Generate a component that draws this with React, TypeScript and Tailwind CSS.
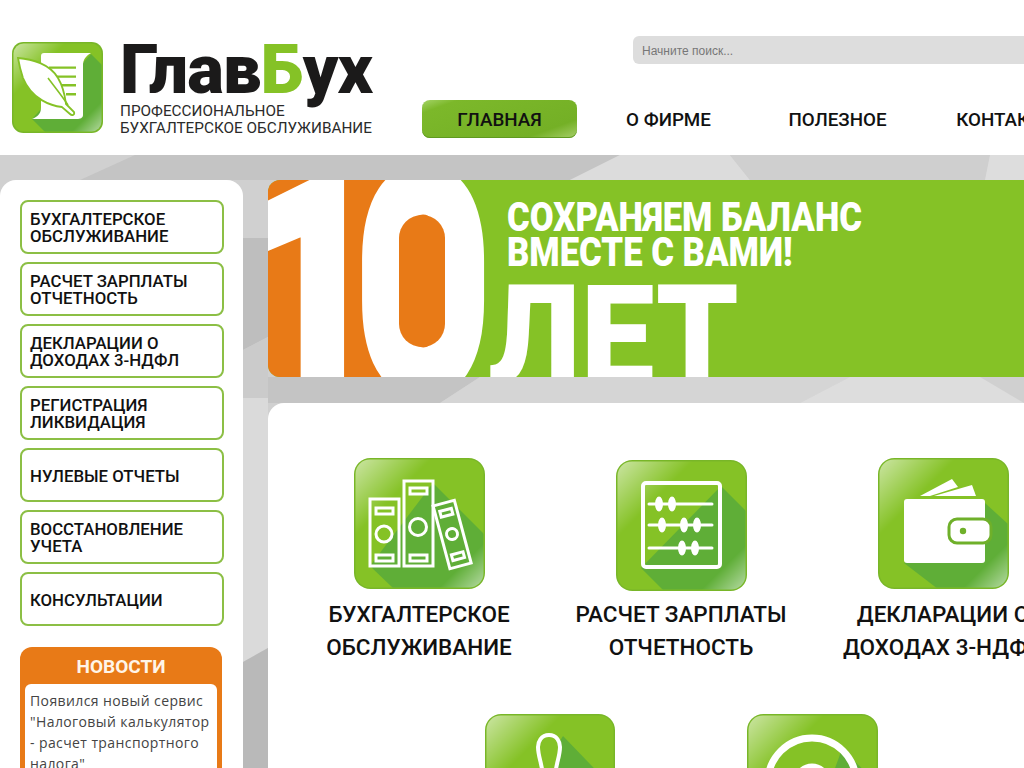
import type { ReactNode } from 'react'

const GREEN = '#85c226'
const SHADOW = '#5fae37'

const sideItems = [
    ['БУХГАЛТЕРСКОЕ', 'ОБСЛУЖИВАНИЕ'],
    ['РАСЧЕТ ЗАРПЛАТЫ', 'ОТЧЕТНОСТЬ'],
    ['ДЕКЛАРАЦИИ О', 'ДОХОДАХ 3-НДФЛ'],
    ['РЕГИСТРАЦИЯ', 'ЛИКВИДАЦИЯ'],
    ['НУЛЕВЫЕ ОТЧЕТЫ'],
    ['ВОССТАНОВЛЕНИЕ', 'УЧЕТА'],
    ['КОНСУЛЬТАЦИИ'],
]

interface TileProps {
    id: string
    size: number
    box: number
    shadow: string
    children: ReactNode
}

const Tile = ({ id, size, box, shadow, children }: TileProps) => {
    return (
        <svg width={size} height={size} viewBox={`0 0 ${box} ${box}`} className="block flex-none">
            <defs>
                <linearGradient id={`${id}-a`} x1="0" y1="0" x2="1" y2="1">
                    <stop offset="0" stopColor="#fff" stopOpacity="0.6" />
                    <stop offset="0.3" stopColor="#fff" stopOpacity="0" />
                </linearGradient>
                <linearGradient id={`${id}-b`} x1="0" y1="0" x2="1" y2="1">
                    <stop offset="0.82" stopColor="#fff" stopOpacity="0" />
                    <stop offset="0.96" stopColor="#fff" stopOpacity="0.45" />
                </linearGradient>
                <clipPath id={`${id}-c`}>
                    <rect x="1.5" y="1.5" width={box - 3} height={box - 3} rx={box * 0.11} />
                </clipPath>
            </defs>
            <rect width={box} height={box} rx={box * 0.125} fill="#78b628" />
            <g clipPath={`url(#${id}-c)`}>
                <rect width={box} height={box} fill={GREEN} />
                <polygon points={shadow} fill={SHADOW} />
                <rect width={box} height={box} fill={`url(#${id}-a)`} />
                <rect width={box} height={box} fill={`url(#${id}-b)`} />
            </g>
            {children}
        </svg>
    )
}

const LogoIcon = () => (
    <Tile id="logo" size={91} box={91} shadow="79,12 91,24 91,91 34,91 20,77">
        <path
            d="M32 11H79C76 13 72 15 71 22V73C71 76 68 77 65 77H20C25 75 29 72 29 66V14C29 12 30 11 32 11Z"
            fill="#fff"
        />
        <g stroke={GREEN} strokeWidth="2.4">
            <path d="M37 25.6H64M42 34.6H64M48 43.3H64M54 52.3H64" />
        </g>
        <path
            d="M6 16C20 17 38 22 46 36C52 46 53 55 54 62L62 70C63 73 60 74 58 72L50 65C40 64 20 58 11 36C9 30 7 22 6 16Z"
            fill="#fff"
            stroke={GREEN}
            strokeWidth="1.8"
        />
        <path d="M36 36C42 44 50 54 56 63" fill="none" stroke={GREEN} strokeWidth="1.6" />
    </Tile>
)

const BooksIcon = () => (
    <Tile id="books" size={131} box={131} shadow="79,25 131,77 131,131 40,131 16,108">
        <g fill="none" stroke="#fff" strokeWidth="3">
            <rect x="16" y="41" width="29" height="67" />
            <rect x="22" y="50" width="17" height="6" />
            <circle cx="30" cy="76" r="8" />
            <rect x="22" y="97" width="17" height="6" />
            <rect x="50" y="23" width="29" height="85" />
            <rect x="56" y="30" width="17" height="6" />
            <circle cx="64" cy="69" r="8.5" />
            <rect x="56" y="97" width="17" height="6" />
            <g transform="rotate(-15 98 76)">
                <rect x="87" y="44" width="22" height="65" />
                <rect x="92" y="51" width="12" height="6" />
                <circle cx="98" cy="76" r="5.5" />
                <rect x="92" y="96" width="12" height="6" />
            </g>
        </g>
    </Tile>
)

const AbacusIcon = () => (
    <Tile id="abacus" size={131} box={131} shadow="105,26 131,52 131,131 48,131 25,108">
        <rect x="27" y="23" width="77" height="84" rx="3" fill="none" stroke="#fff" strokeWidth="4" />
        <path d="M33 44H96M33 65H96M33 88H96" stroke="#fff" strokeWidth="3" strokeLinecap="round" />
        <g fill="#fff">
            <ellipse cx="43" cy="44" rx="4" ry="7.5" />
            <ellipse cx="56" cy="44" rx="4" ry="7.5" />
            <ellipse cx="46" cy="65" rx="4" ry="7.5" />
            <ellipse cx="68" cy="65" rx="4" ry="7.5" />
            <ellipse cx="81" cy="65" rx="4" ry="7.5" />
            <ellipse cx="66" cy="88" rx="4" ry="7.5" />
            <ellipse cx="79" cy="88" rx="4" ry="7.5" />
        </g>
    </Tile>
)

const WalletIcon = () => (
    <Tile id="wallet" size={131} box={131} shadow="107,45 131,67 131,131 60,131 26,105">
        <polygon points="42,38 74,21 80,29 52,38" fill="#fff" />
        <polygon points="56,38 94,27 98,38" fill="#fff" />
        <rect x="26" y="41" width="81" height="64" rx="3" fill="#fff" />
        <rect x="71" y="61" width="42" height="24" rx="8" fill="#fff" stroke="#6fb02a" strokeWidth="3" />
        <circle cx="85" cy="73" r="3.2" fill="#6fb02a" />
    </Tile>
)

const StampIcon = () => (
    <Tile id="stamp" size={130} box={130} shadow="78,22 131,77 131,131 30,131 30,100">
        <path
            d="M64 21C56 21 53 28 53 33C53 42 57 50 58 62H70C71 50 75 42 75 33C75 28 72 21 64 21Z"
            fill={GREEN}
            stroke="#fff"
            strokeWidth="4"
        />
        <rect x="28" y="80" width="72" height="18" rx="3" fill="#fff" />
    </Tile>
)

const TargetIcon = () => (
    <Tile id="target" size={131} box={131} shadow="95,35 131,70 131,131 60,131">
        <circle cx="65" cy="68" r="44" fill="none" stroke="#fff" strokeWidth="7" />
        <circle cx="65" cy="68" r="15" fill="none" stroke="#fff" strokeWidth="7" />
    </Tile>
)

const services = [
    { icon: <BooksIcon />, lines: ['БУХГАЛТЕРСКОЕ', 'ОБСЛУЖИВАНИЕ'], pt: 'pt-0' },
    { icon: <AbacusIcon />, lines: ['РАСЧЕТ ЗАРПЛАТЫ', 'ОТЧЕТНОСТЬ'], pt: 'pt-[2px]' },
    { icon: <WalletIcon />, lines: ['ДЕКЛАРАЦИИ О', 'ДОХОДАХ 3-НДФЛ'], pt: 'pt-0' },
    { icon: <StampIcon />, lines: ['РЕГИСТРАЦИЯ', 'ЛИКВИДАЦИЯ'], pt: 'pt-0' },
    { icon: <TargetIcon />, lines: ['НУЛЕВЫЕ ОТЧЕТЫ'], pt: 'pt-0' },
]

const Background = () => (
    <svg className="absolute inset-0 h-full w-full" viewBox="0 0 1024 613" preserveAspectRatio="none">
        <rect width="1024" height="613" fill="#d0d0d0" />
        <polygon points="135,0 620,0 570,25 80,25" fill="#c4c4c4" />
        <polygon points="620,0 730,0 750,25 570,25" fill="#dcdcdc" />
        <polygon points="730,0 990,0 985,25 750,25" fill="#cfcfcf" />
        <polygon points="990,0 1024,0 1024,25 985,25" fill="#dddddd" />
        <polygon points="243,83 268,83 268,182 243,195" fill="#bebebe" />
        <polygon points="243,195 268,182 268,243 243,243" fill="#cbcbcb" />
        <polygon points="243,243 268,243 268,493 243,507" fill="#dadada" />
        <polygon points="243,507 268,493 268,613 243,613" fill="#b9b9b9" />
        <polygon points="268,222 480,222 440,248 268,248" fill="#c4c4c4" />
        <polygon points="480,222 850,222 800,248 440,248" fill="#d5d5d5" />
        <polygon points="850,222 980,222 1024,248 800,248" fill="#dddddd" />
    </svg>
)

const App = () => {
    return (
        <div className="relative h-[768px] w-[1024px] overflow-hidden bg-white font-['Roboto',sans-serif] text-[#111]">
            <header className="flex h-[155px] items-start pl-3">
                <div className="flex w-[410px] flex-none pt-[42px]">
                    <LogoIcon />
                    <div className="ml-[17px]">
                        <div className="mt-[-8px] h-[66px] text-[69px] leading-[72px] font-black tracking-[-1px] text-[#1b1a1a]">
                            Глав<span className="text-[#85c226]">Б</span>ух
                        </div>
                        <div className="mt-[3px] text-[15.3px] leading-[17px] text-[#2b2b2b]">
                            <div>ПРОФЕССИОНАЛЬНОЕ</div>
                            <div className="whitespace-nowrap">БУХГАЛТЕРСКОЕ ОБСЛУЖИВАНИЕ</div>
                        </div>
                    </div>
                </div>
                <div className="flex-none pt-9">
                    <div className="ml-[211px] flex h-7 w-[500px] items-center rounded-md bg-[#dddddd] pt-[2px] pl-[9px] font-['Liberation_Sans',sans-serif] text-[12px] text-[#777]">
                        Начните поиск...
                    </div>
                    <nav className="mt-9 flex gap-[14px] text-[18.8px] font-medium">
                        <a className="flex h-[38px] w-[155px] flex-none items-center justify-center rounded-lg bg-[linear-gradient(160deg,#a5d468_0%,#7cb82a_14%,#74b026_80%,#a7cf6a_100%)] pt-[2px] shadow-[inset_0_-1px_0_#5f9a20]">
                            ГЛАВНАЯ
                        </a>
                        <a className="flex h-[38px] w-[155px] flex-none items-center justify-center pt-[2px]">О ФИРМЕ</a>
                        <a className="flex h-[38px] w-[155px] flex-none items-center justify-center pt-[2px]">ПОЛЕЗНОЕ</a>
                        <a className="flex h-[38px] w-[155px] flex-none items-center justify-center pt-[2px]">КОНТАКТЫ</a>
                    </nav>
                </div>
            </header>

            <div className="relative flex h-[613px] items-start pt-[25px]">
                <Background />

                <aside className="relative w-[243px] flex-none rounded-2xl bg-white px-5 pt-5 pb-6">
                    <div className="flex w-[204px] flex-col gap-2">
                        {sideItems.map((lines) => (
                            <div
                                key={lines[0]}
                                className="flex h-[54px] flex-col justify-center rounded-lg border-2 border-[#8cbf45] pt-[2px] pl-2 text-[16.8px] leading-[17px] font-medium"
                            >
                                {lines.map((line) => (
                                    <span key={line} className="whitespace-nowrap">{line}</span>
                                ))}
                            </div>
                        ))}
                    </div>
                    <div className="mt-[21px] w-[202px] rounded-t-xl bg-[#e87a17] px-[5px] pb-2">
                        <div className="flex h-[37px] items-center justify-center pt-[4px] text-[19px] font-bold text-[#fff5e8]">
                            НОВОСТИ
                        </div>
                        <div className="rounded-t-md bg-white px-[5px] pt-[6px] pb-2 font-['Open_Sans',sans-serif] text-[14px] leading-[21px] tracking-[0.4px] text-[#444]">
                            Появился новый сервис "Налоговый калькулятор - расчет транспортного налога"
                        </div>
                    </div>
                </aside>

                <main className="relative ml-[25px] w-[826px] flex-none">
                    <div className="relative h-[197px] overflow-hidden rounded-l-xl bg-[#85c226]">
                        <div className="absolute top-0 left-0 h-full w-[172px] bg-[#e87a17]" />
                        <span className="absolute top-[-95px] left-[-15px] origin-top-left scale-x-[0.7] text-[304px] leading-[400px] font-black text-white [-webkit-text-stroke:12px_white]">
                            1
                        </span>
                        <span className="absolute top-[-95px] left-[89px] origin-top-left scale-x-[0.75] text-[304px] leading-[400px] font-black text-white [-webkit-text-stroke:12px_white]">
                            0
                        </span>
                        <div className="absolute top-[35px] left-[131px] h-[132px] w-[46px] rounded-[23px] bg-[#e87a17]" />
                        <div className="absolute top-[20px] left-[239px] origin-top-left scale-x-[0.866] whitespace-nowrap text-[40px] leading-[35px] font-black text-white">
                            <div>СОХРАНЯЕМ БАЛАНС</div>
                            <div>ВМЕСТЕ С ВАМИ!</div>
                        </div>
                        <span className="absolute top-[86px] left-[220px] origin-top-left scale-x-[0.94] text-[140px] leading-[140px] font-black text-white">
                            ЛЕТ
                        </span>
                    </div>
                    <div className="mt-[26px] rounded-tl-2xl bg-white pt-[55px]">
                        <div className="flex flex-wrap justify-center gap-y-[50px]">
                            {services.map((item) => (
                                <div key={item.lines[0]} className="flex w-[262px] flex-none flex-col items-center">
                                    <div className={`flex h-[133px] items-start ${item.pt}`}>{item.icon}</div>
                                    <div className="mt-[7px] text-center text-[22.5px] leading-[33px] font-medium whitespace-nowrap">
                                        {item.lines.map((line) => (
                                            <div key={line}>{line}</div>
                                        ))}
                                    </div>
                                </div>
                            ))}
                        </div>
                    </div>
                </main>
            </div>
        </div>
    )
}

export default App
